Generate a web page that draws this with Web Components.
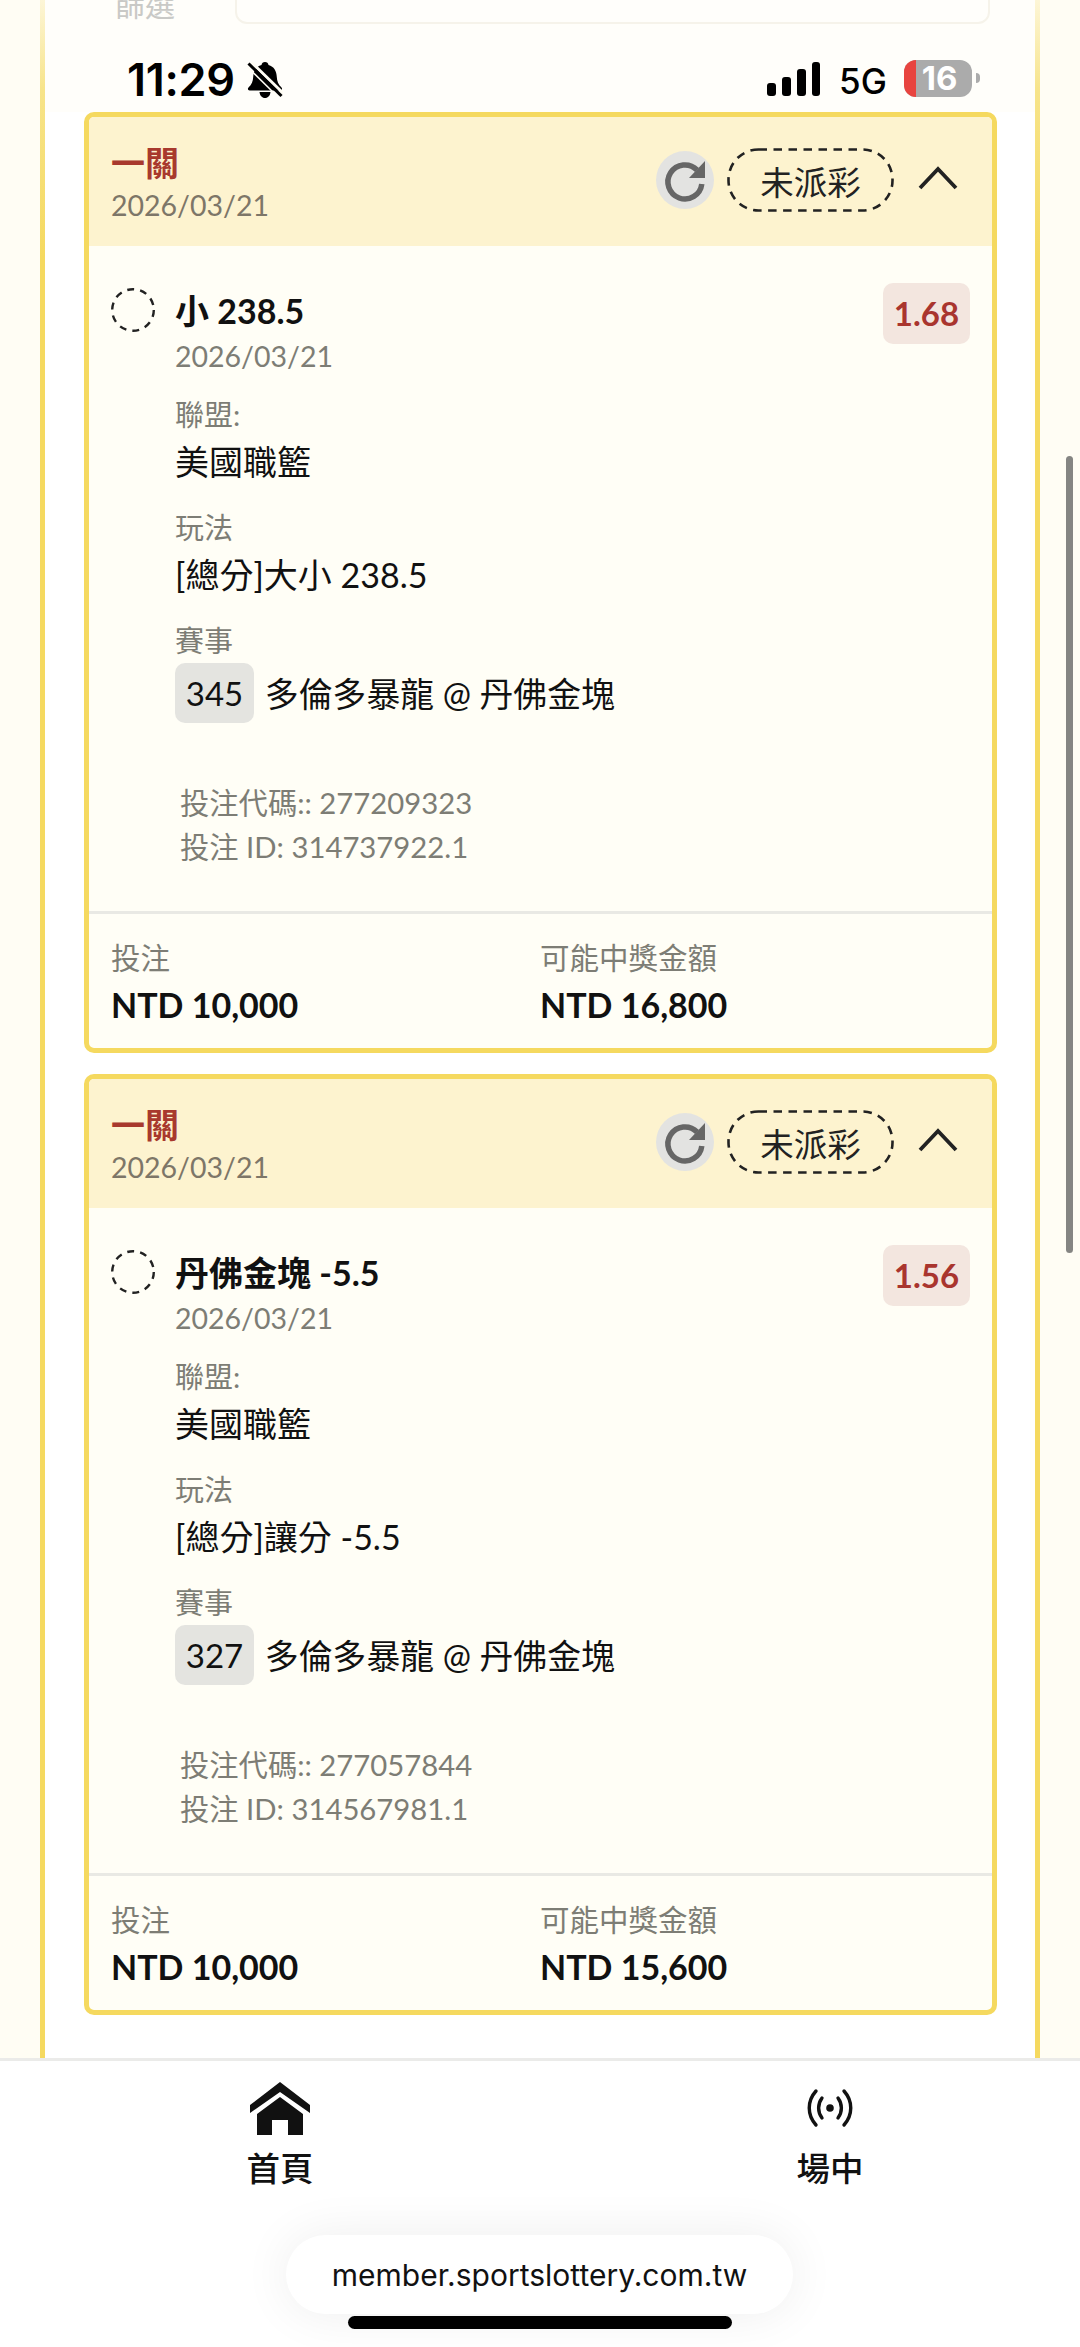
<!DOCTYPE html>
<html lang="zh-Hant">
<head>
<meta charset="utf-8">
<title>投注紀錄</title>
<style>
html,body{margin:0;padding:0;background:#fffdf3}
body{width:1080px;height:2347px;overflow:hidden;font-family:Lato,"Noto Sans CJK TC",sans-serif}
</style>
</head>
<body>
<app-shell>
  <status-bar slot="overlay"></status-bar>
  <filter-row>篩選</filter-row>
  <bet-card odds="1.68" date="2026/03/21" stake="NTD 10,000" payout="NTD 16,800" code="277209323" bet-id="314737922.1" no="345">
    <span slot="title">小 238.5</span>
    <span slot="league">美國職籃</span>
    <span slot="play">[總分]大小 238.5</span>
    <span slot="match">多倫多暴龍 @ 丹佛金塊</span>
  </bet-card>
  <bet-card odds="1.56" date="2026/03/21" stake="NTD 10,000" payout="NTD 15,600" code="277057844" bet-id="314567981.1" no="327">
    <span slot="title">丹佛金塊 -5.5</span>
    <span slot="league">美國職籃</span>
    <span slot="play">[總分]讓分 -5.5</span>
    <span slot="match">多倫多暴龍 @ 丹佛金塊</span>
  </bet-card>
  <tab-bar slot="bottom"></tab-bar>
</app-shell>
<script>
const CJK='Lato,"Noto Sans CJK TC",sans-serif';
function make(name,html){
  customElements.define(name,class extends HTMLElement{
    connectedCallback(){
      if(this.shadowRoot)return;
      const root=this.attachShadow({mode:'open'});
      let out=html;
      for(const a of this.attributes){out=out.split('{{'+a.name+'}}').join(a.value);}
      root.innerHTML=out;
    }
  });
}
make('app-shell',`<style>
:host{display:flex;flex-direction:column;position:relative;width:1080px;height:2347px;overflow:hidden;background:#fff;font-family:${CJK}}
.top{height:2058px;box-sizing:border-box;padding:0 40px;overflow:hidden;background:#fffdf4}
.panel{height:100%;box-sizing:border-box;background:linear-gradient(180deg,#fffefa 0,#fffefa 112px,#fff 112px);
 border-left:5px solid;border-right:5px solid;border-image:linear-gradient(180deg,#fdf6d8 0,#f7e48a 90px,#f5d95f 260px,#f5d95f 100%) 1;
 padding:0 38px 0 39px;display:flex;flex-direction:column;gap:21px}
.thumb{position:absolute;left:1066px;top:456px;width:7px;height:797px;background:#858582;border-radius:4px}
</style>
<div class="top"><div class="panel"><slot></slot></div></div>
<slot name="bottom"></slot>
<slot name="overlay"></slot>
<div class="thumb"></div>`);

make('filter-row',`<style>
:host{display:flex;height:91px;flex:none;box-sizing:border-box;padding-left:31px;padding-right:7px;gap:56px;color:#c9c9c6;font-size:30px;align-items:flex-start}
.l{margin-top:-16px;line-height:40px;width:64px;flex:none}
.i{flex:1;height:26px;margin-top:-2px;box-sizing:border-box;border:2px solid #f6f3ea;border-radius:0 0 12px 12px;background:#fffefb}
</style>
<div class="l"><slot></slot></div><div class="i"></div>`);

make('status-bar',`<style>
:host{position:absolute;left:0;top:0;width:1080px;height:112px;color:#000;font-family:Inter,"Liberation Sans",sans-serif;display:block}
.t{position:absolute;left:127px;top:54px;font-size:45px;line-height:52px;font-weight:600;letter-spacing:-.3px}
.bell{position:absolute;left:247px;top:62px}
.sig{position:absolute;left:767px;top:62px}
.g{position:absolute;left:839px;top:57px;font-size:35px;line-height:48px;font-weight:500}
.bat{position:absolute;left:904px;top:60px;width:68px;height:37px;border-radius:12px;background:#ababab;color:#fff;font-size:33px;font-weight:700;line-height:37px;text-align:center}
.bat i{position:absolute;left:0;top:0;width:12px;height:37px;background:#e8443f;border-radius:12px 0 0 12px}
.bat span{position:relative;margin-left:3px}
.nub{position:absolute;left:976px;top:73px;width:4px;height:10px;border-radius:0 4px 4px 0;background:#ababab}
</style>
<div class="t">11:29</div>
<svg class="bell" width="36" height="36" viewBox="0 0 36 36"><path d="M18 0c2 0 3.200 1.200 3.500 3 5.500 1.500 8 6 8.300 12 .2 4.500 1.500 7.500 4.700 10.500 1.200 1.200.5 3-1.200 3H2.700c-1.700 0-2.400-1.800-1.200-3 3.200-3 4.500-6 4.700-10.500.3-6 2.800-10.500 8.300-12 .3-1.800 1.500-3 3.500-3z" fill="#000"/><path d="M12.500 30h11c-.3 3.500-2.500 6-5.500 6s-5.200-2.500-5.500-6z" fill="#000"/><path d="M4 0L37 32" stroke="#fffdf4" stroke-width="3"/><path d="M1.500 1.500L34.500 34" stroke="#000" stroke-width="3"/><path d="M-.500 4L30 34" stroke="#fffdf4" stroke-width="1.500"/></svg>
<svg class="sig" width="53" height="34" viewBox="0 0 53 34" fill="#000"><rect x="0" y="21" width="9" height="13" rx="3"/><rect x="15" y="15" width="9" height="19" rx="3"/><rect x="30" y="7" width="9" height="27" rx="3"/><rect x="45" y="0" width="8" height="34" rx="3"/></svg>
<div class="g">5G</div>
<div class="bat"><i></i><span>16</span></div><div class="nub"></div>`);

customElements.define('refresh-btn',class extends HTMLElement{
  connectedCallback(){ if(this.shadowRoot)return; this.attachShadow({mode:'open'}).innerHTML=`<style>
:host{display:block;width:58px;height:58px;border-radius:50%;background:#e3e3e1;flex:none}
svg{display:block}
</style><svg width="58" height="58" viewBox="0 0 58 58"><path d="M41 19A17 17 0 1 0 45.800 33" fill="none" stroke="#666" stroke-width="5.500"/><path d="M49 10V27H33z" fill="#666"/></svg>`;}
});

make('bet-card',`<style>
:host{display:block;flex:none;box-sizing:border-box;height:941px;border:5px solid #f5d95f;border-radius:10px;background:#fffef6;overflow:hidden;font-family:${CJK};position:relative}
.h{height:129px;box-sizing:border-box;padding:26px 34px 0 22px;background:#fdf3cf;display:flex;justify-content:space-between}
.ht{font-size:34px;line-height:40px;font-weight:700;color:#a8392d}
.hd{font-size:28.500px;line-height:44px;color:#7d7668}
.ctl{display:flex;align-items:center;height:64px;margin-top:5px}
.st-wrap{position:relative;margin-left:13px;width:167px;height:64px;display:flex;align-items:center;justify-content:center;font-size:33.500px;color:#222}
.st-wrap svg{position:absolute;left:0;top:0}
.chev{margin-left:24px;margin-top:-4px;display:block}
.b{padding:42px 22px 0 22px;height:665px;box-sizing:border-box}
.r1{display:flex;align-items:flex-start}
.dash{flex:none;display:block}
.tt{margin-left:20px;flex:1}
.t1{font-size:34px;line-height:46px;font-weight:700;color:#111}
.t2{font-size:28.500px;line-height:44px;color:#7d7d75}
.odds{flex:none;width:87px;height:61px;margin-top:-5px;border-radius:10px;background:#f3e6df;color:#a9352e;font-size:33px;font-weight:700;line-height:61px;text-align:center}
.fs{margin-left:64px}
.lab{font-size:29px;line-height:44px;color:#7d7d75}
.val{font-size:34px;line-height:50px;color:#111}
.f1{margin-top:15px}.f2{margin-top:19px}.f3{margin-top:19px}
.mr{display:flex;align-items:center;height:60px;font-size:33.800px;color:#111}
.mr ::slotted(span){position:relative;top:-1px}
.no{width:79px;height:60px;border-radius:10px;background:#e4e4e0;text-align:center;line-height:60px;font-size:33px;margin-right:11px;flex:none}
.ids{margin:58px 0 0 69px;font-size:29.300px;line-height:44px;color:#7d7d75}
.ft{border-top:3px solid #e9e9e4;padding:22px 22px 0 22px;display:grid;grid-template-columns:429px 1fr}
.fl{font-size:29.500px;line-height:44px;color:#7d7d75}
.fv{font-size:34px;line-height:50px;font-weight:700;color:#111}
</style>
<div class="h">
  <div><div class="ht">一關</div><div class="hd">{{date}}</div></div>
  <div class="ctl">
    <refresh-btn></refresh-btn>
    <div class="st-wrap"><svg width="167" height="64" viewBox="0 0 167 64"><rect x="1.500" y="1.500" width="164" height="61" rx="30" fill="none" stroke="#222" stroke-width="2.600" stroke-dasharray="8.500 6.500"/></svg><span style="position:relative">未派彩</span></div>
    <svg class="chev" width="40" height="24" viewBox="0 0 40 24"><path d="M2 22L20 3L38 22" fill="none" stroke="#222" stroke-width="3.800"/></svg>
  </div>
</div>
<div class="b">
  <div class="r1">
    <svg class="dash" width="44" height="44" viewBox="0 0 44 44"><circle cx="22" cy="22" r="20.800" fill="none" stroke="#222" stroke-width="2.400" stroke-dasharray="7 6.080"/></svg>
    <div class="tt"><div class="t1"><slot name="title"></slot></div><div class="t2">{{date}}</div></div>
    <div class="odds">{{odds}}</div>
  </div>
  <div class="fs">
    <div class="f1"><div class="lab">聯盟:</div><div class="val"><slot name="league"></slot></div></div>
    <div class="f2"><div class="lab">玩法</div><div class="val"><slot name="play"></slot></div></div>
    <div class="f3"><div class="lab">賽事</div><div class="mr"><span class="no">{{no}}</span><slot name="match"></slot></div></div>
  </div>
  <div class="ids"><div>投注代碼:: {{code}}</div><div>投注 ID: {{bet-id}}</div></div>
</div>
<div class="ft">
  <div><div class="fl">投注</div><div class="fv">{{stake}}</div></div>
  <div><div class="fl">可能中獎金額</div><div class="fv">{{payout}}</div></div>
</div>`);

make('tab-bar',`<style>
:host{display:block;position:relative;flex:none;height:289px;box-sizing:border-box;border-top:3px solid #ebebe9;background:#fff;font-family:${CJK}}
.tabs{display:grid;grid-template-columns:560px 540px;height:130px;padding-top:21px}
.tab{display:flex;flex-direction:column;align-items:center;color:#111;font-size:33.500px;font-weight:500;line-height:44px}
.ic{height:53px;display:flex;align-items:flex-end;justify-content:center;margin-bottom:11px}
.pill{position:absolute;left:286px;top:174px;width:507px;height:79px;border-radius:40px;background:#fff;box-shadow:0 0 50px rgba(0,0,0,.07);display:flex;align-items:center;justify-content:center;font-family:Inter,"Liberation Sans",sans-serif;font-size:30px;color:#111}
.home{position:absolute;left:348px;top:255px;width:384px;height:13px;border-radius:7px;background:#000}
</style>
<div class="tabs">
<div class="tab"><div class="ic"><svg width="60" height="53" viewBox="0 0 60 53"><path d="M30 0L60 23V31L30 10L0 31V23z" fill="#111"/><path d="M30 15L53 32V53H38V38H22V53H7V32z" fill="#111"/></svg></div>首頁</div>
<div class="tab"><div class="ic"><svg width="46" height="42" viewBox="0 0 46 42" style="margin-bottom:6px"><g fill="none" stroke="#111" stroke-width="3.400" stroke-linecap="round"><path d="M9 4C0 14 0 28 9 38"/><path d="M37 4C46 14 46 28 37 38"/><path d="M15 11C10.500 17 10.500 25 15 31"/><path d="M31 11C35.500 17 35.500 25 31 31"/></g><circle cx="23" cy="21" r="3.800" fill="#111"/></svg></div>場中</div>
</div>
<div class="pill">member.sportslottery.com.tw</div>
<div class="home"></div>`);
</script>
</body>
</html>
